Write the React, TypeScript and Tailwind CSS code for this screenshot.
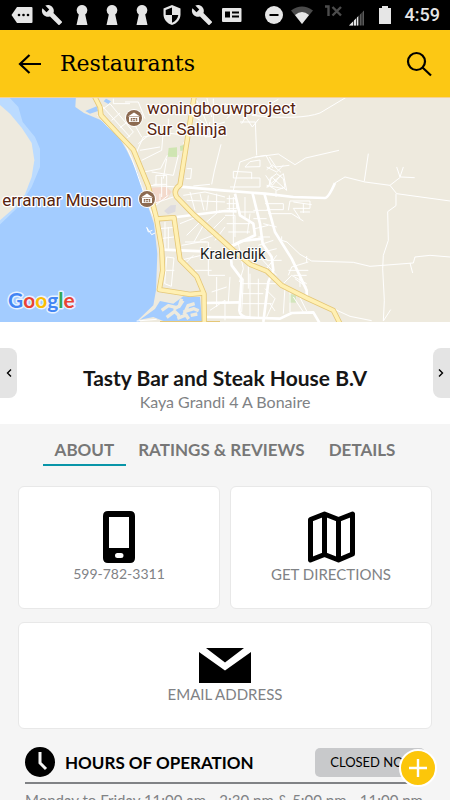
import type { ReactNode } from 'react';
import { useState } from 'react';
import clsx from 'clsx';

const TABS = ['About', 'Ratings & Reviews', 'Details'];

const HOURS = ['Monday to Friday 11:00 am - 2:30 pm & 5:00 pm - 11:00 pm'];

// ── Status bar icons ─────────────────────────────────────────────────────────
function WrenchIcon() {
    return (
        <svg viewBox="0 0 24 24" className="h-[22px] w-[22px]" fill="#e6e6e6">
            <path d="M22.7 19l-9.1-9.1c.9-2.3.4-5-1.5-6.9-2-2-5-2.4-7.4-1.3L9 6 6 9 1.6 4.700C.4 7.100.9 10.100 2.900 12.100c1.900 1.900 4.600 2.400 6.900 1.500l9.100 9.100c.4.4 1 .4 1.400 0l2.300-2.300c.5-.4.5-1.100.1-1.400z" />
        </svg>
    );
}

function KeyholeIcon() {
    return (
        <svg viewBox="0 0 12 20" className="h-5 w-3" fill="#e6e6e6">
            <path d="M6 0a5.300 5.300 0 0 1 3.200 9.500L11.500 20H.5L2.800 9.500A5.300 5.300 0 0 1 6 0z" />
        </svg>
    );
}

function MessageIcon() {
    return (
        <svg viewBox="0 0 22 16" className="h-4 w-[22px]">
            <path d="M6 0h14.500q1 0 1 1v14q0 1-1 1H6L.5 8z" fill="#e6e6e6" />
            <g fill="#000">
                <circle cx="8" cy="8" r="1.300" />
                <circle cx="12.500" cy="8" r="1.300" />
                <circle cx="17" cy="8" r="1.300" />
            </g>
        </svg>
    );
}

function ShieldIcon() {
    return (
        <svg viewBox="0 0 18 20" className="h-5 w-[18px]">
            <path d="M9 0l8.500 3.500v6c0 5-3.500 9-8.500 10.500C4 18.500.5 14.500.5 9.500v-6z" fill="#e6e6e6" />
            <path d="M9 2.500V10H2.700V5zM9 10h6.300c-.5 3.500-3 6.500-6.300 7.700z" fill="#000" />
        </svg>
    );
}

function CardIcon() {
    return (
        <svg viewBox="0 0 20 14" className="h-[14px] w-5">
            <rect width="19.500" height="14" rx="1" fill="#e6e6e6" />
            <path d="M3 3.500h5v6H3zM10 3.500h7v2h-7zM10 7.500h7v2h-7z" fill="#000" />
        </svg>
    );
}

function StatusBar() {
    const notifications: ReactNode[] = [
        <MessageIcon />,
        <WrenchIcon />,
        <KeyholeIcon />,
        <KeyholeIcon />,
        <KeyholeIcon />,
        <ShieldIcon />,
        <WrenchIcon />,
        <CardIcon />,
    ];

    return (
        <div className="flex h-[30px] shrink-0 items-center justify-between bg-black pr-[10px] pl-[7px]">
            <div className="flex">
                {notifications.map((icon, i) => (
                    <span key={i} className="flex h-[30px] w-[30px] items-center justify-center">
                        {icon}
                    </span>
                ))}
            </div>
            <div className="flex items-center gap-2">
                <svg viewBox="0 0 18 18" className="h-[18px] w-[18px]">
                    <circle cx="9" cy="9" r="9" fill="#e6e6e6" />
                    <path d="M4.500 8h9v2h-9z" fill="#000" />
                </svg>
                <svg viewBox="0 0 22 18" className="h-[18px] w-[22px]">
                    <path d="M0 4.500Q11-3.500 22 4.500L11 18z" fill="#4a4a4a" />
                    <path d="M4 9q7-6 14 0L11 18z" fill="#e6e6e6" />
                </svg>
                <svg viewBox="0 0 40 24" className="ml-1 h-6 w-10">
                    <path d="M0 3.500h3.500V13M7.500 4l8.500 8.500M16 4l-8.500 8.500" fill="none" stroke="#4c4c4c" strokeWidth="2.400" />
                    <path d="M24 22.500L39 7.500v15z" fill="#5a5a5a" />
                    <path d="M24 22.500l9-9v9z" fill="#e6e6e6" />
                    <path d="M28.500 16v7M31.500 14v9M34.500 11v12M37 8v15" stroke="#000" strokeWidth=".7" />
                </svg>
                <svg viewBox="0 0 12 18" className="mx-[6px] h-[18px] w-3" fill="#e6e6e6">
                    <path d="M3 0h6v2h3v16H0V2h3z" />
                </svg>
                <span className="font-[Roboto,sans-serif] text-[18px] leading-[30px] font-medium text-[#e6e6e6]">4:59</span>
            </div>
        </div>
    );
}

// ── Map ──────────────────────────────────────────────────────────────────────
function MuseumPin({ x, y }: { x: number; y: number }) {
    return (
        <g transform={`translate(${x} ${y})`}>
            <circle r="9" fill="#fff" />
            <circle r="8" fill="#8c6a50" />
            <path d="M-6-1.500L0-5.500l6 4zM-5-1h10v5H-5z" fill="#fff" />
            <path d="M-3.200 0h6.400v3.200h-6.400z" fill="#8c6a50" />
            <path d="M-1.700 3.200V.8L0 2.200 1.700.8v2.400" fill="none" stroke="#fff" strokeWidth=".9" />
        </g>
    );
}

const GOLD_ROADS = [
    'M282-5L300 30L303 55L352 108L400 158L445 268L470 366L522 362L540 488L590 538L612 590L613 690',
    'M583-5L540 264Q518 280 530 300L580 352L700 460L750 502L800 522L845 565L920 603L1000 640L1025 690',
    'M470 366L485 455L488 520L478 578L570 592L612 588',
];

function MapView() {
    return (
        <svg
            viewBox="0 0 450 225"
            preserveAspectRatio="xMidYMid slice"
            className="block h-[225px] w-full shrink-0 bg-[#eeeade]"
            role="img"
            aria-label="Map of Kralendijk"
            fontFamily="Roboto, sans-serif"
        >
            <g transform="scale(.33333)" fill="none" strokeLinejoin="round">
                <path d="M-5-5H228L226 30L252 48L300 68L345 100L380 160L412 225L435 300L462 380L472 470L468 580L460 625L415 668L430 685H-5z" fill="#a3ccff" />
                <path d="M-5-5H22L55 30L68 75L105 120L120 155V210L95 270L60 325L-5 387z" fill="#bbdbff" />
                <path d="M-5 20L30 50L65 92L95 138L103 190L95 240L75 292L40 335L-5 374z" fill="#eeeade" />
                <path d="M256 42L290 28L294 42L270 50z" fill="#a3ccff" />
                <path d="M318 5l15 8-8 8-14-8z" fill="#a3ccff" />

                {/* Marina */}
                <path d="M420 668L465 636L480 612L520 620L550 598L600 600L606 672H490l-30-12z" fill="#a3ccff" />
                <path d="M485 640l20-14 22 5M545 605l-8 24 12-18M500 661l24-18 14 14M552 652l12-26 20-6M550 645l32-10 14 6M520 637l18-10M532 664l26-10 8 12M572 655l20-4" stroke="#eeeade" strokeWidth="10" />

                {/* Parks and city centre */}
                <path d="M506 153l25-2v29l-28-1zM540 147l13-4v17l-12 2z" fill="#cfe5b2" />
                <path d="M868 592h20v25h-20z" fill="#d3e5bc" />
                <path d="M450 272l50-2 15 14-12 20-50 24z" fill="#f3d9cb" />
                <path d="M492 342l20-17 16-1-2 20-22 8z" fill="#dddbdf" />

                {/* Minor streets */}
                <g stroke="#fff" strokeWidth="3">
                    <path d="M300 20l90 100M310 35l20-15 70 85-18 18M335 70l25-22M360 92l26-20M375 15h40l20 50M340 5v15h50" />
                    <path d="M410 165l20-45 70-12 70 8M415 140l55-45M425 190l60-30 5-60M432 225l50-10 20-40M425 120l-20-35M505 108V65M480 150l-60 10M500 185l-10 60M445 265l90 5M455 225l65 10 15-60M550 140l20-35" />
                    <path d="M468 265v-30h32v60M485 240v60M500 262h-40M505 295l-45 35M520 300l-60 20M480 290v20" />
                    <path d="M590 10l15 30 70 0M585 60l30 20v40l60-5M575 100l45 15 10-40M605 40l20 50 50-15M620 0l15 60M640 5v90l35 10M650 40h30M560 215h15l-3 30h-15M635 262l8-40 20-80M630 262l-50 5" />
                    <path d="M475 395l50-4M480 425l50-6M465 408l-10 5-14-20M440 390l5 15 12-5M495 375v85M505 390v65M500 480l-6 80 20 8 8-85zM498 520h25M545 445l55-10h25v25M555 435h65M540 490l85-20 50 5M550 505l30-30M625 465v70h50M585 520h50M540 380l50-20 30 40M600 375l-40 40M610 385l-28 50M545 325l45 25M550 295l65-10 60 15M570 285l15 55M600 290l12 50M625 295l-5 45M650 290v55M560 310l115 5M640 395l35-35M620 375l40-35M645 430l30-40M600 430l40-15" />
                    <path d="M700 280l20-85 40-14 75-10 50 32 32-20 100-23M770 175L766 75H720M765 180l33-5 20 38M690 270h90v-27h-80M700 243v-20l55 3v20M735 210l15-16 30-5v20zM725 80l12-20 20 30 20-25M680 65l25-25 80-5 50-28M675 20l30 15" />
                    <path d="M808 180l20 30 40-5M800 218l18-14 25 22M800 210l30 15 20-20M800 270l50-40 10 50-45-40-10 30zM810 245l20-15 20 15 5 25-25 10-20-12zM800 265l50 10M828 280v20M797 235l20 30 25-30" />
                    <path d="M755 55Q900 70 960 48L1040 0M1093 252L1105 170M1190 210l10 30 10-30M1170 265l32-25 42 2" />
                    <path d="M1005 258L1035 240L1095 255L1170 265L1190 290L1350 312M1188 290V326L1163 344L1165 430L1150 475L1148 515L1153 610L1150 672L1172 638" />
                    <path d="M845 430l16 5L900 472L935 492L1060 496L1110 508L1240 498L1245 480L1290 475L1350 480M1230 498l8 30M925 495l-50 15M920 495v-18M875 510l-10 25M845 430v-12" />
                    <path d="M795 320h55v18h-50M865 340l5-28h60v22h-50l20 30M900 345h30M805 350h70l35 22M910 318v30M880 315l55 8" />
                    <path d="M680 305h30v30h-30M688 295v50M700 300v65M680 320h35M675 355h30v65M680 380h70M685 405h65M700 360v80M720 345h45M735 300v60M750 350l-8 60M760 365h40M765 395l40-10M775 420h35M775 445l45-15M790 465l40-10M800 490h45M830 475l-30 40M790 380l40 10M760 340h50" />
                    <path d="M715 440l15 75-12 40M725 465l50 10 55 60M745 485v90M690 540l-5 75M730 545l-5 100M750 530v130M775 545v115M795 575l30 30-25 55M725 560h110M725 590h65M725 620h90M810 620l15 22M855 570l-5 80M870 575v70M880 600l30 45M850 560l25-25 45 25M865 520h60M880 535h40M885 545l35 25M900 530v40M630 640l45-30v60M650 540v90M680 570l-45 15" />
                    <path d="M410 672l60-5M1000 635l50 23 65 13M900 602l20 40" />
                </g>

                {/* Main streets */}
                <g stroke="#fff" strokeWidth="8">
                    <path d="M540 269L675 281L795 290L880 300L975 303Q985 303 1005 258" />
                    <path d="M530 360L675 342L710 343M470 366L488 458L613 463M613 618L720 616M615 660L725 661L840 665L875 648L940 646L960 680" />
                    <path d="M705 290L720 355L760 380L765 415L690 450L695 505L725 545L718 640Q720 662 750 661M758 290L780 380L788 440L815 480L820 520L805 555L790 675M793 290L825 405L875 485L920 580V602" />
                    <path d="M688 450L725 432L790 425" />
                </g>
                <path d="M293 55Q320 90 350 112T410 225T465 370T485 460" stroke="#fff" strokeWidth="3" />

                {GOLD_ROADS.map((d) => <path key={d} d={d} stroke="#e5c777" strokeWidth="16" />)}
                <path d="M480 674h180" stroke="#e5c777" strokeWidth="4" />
                {GOLD_ROADS.map((d) => <path key={d} d={d} stroke="#fff0b3" strokeWidth="11" />)}
            </g>
            <path d="M0 .5h450" stroke="#f6d292" />

            <MuseumPin x={134} y={21} />
            <MuseumPin x={147} y={102} />
            <g fontSize="17" fill="#57240f" stroke="#fff" strokeWidth="2.500" strokeLinejoin="round" paintOrder="stroke">
                <text x="147" y="17">woningbouwproject</text>
                <text x="147" y="38">Sur Salinja</text>
                <text x="132" y="109" textAnchor="end">erramar Museum</text>
            </g>
            <text x="200" y="162" fontSize="15" fill="#222" stroke="#fff" strokeWidth="2" paintOrder="stroke">Kralendijk</text>
            <text
                x="8"
                y="211"
                fontFamily="Lato, sans-serif"
                fontSize="21"
                fontWeight="700"
                stroke="#e8f2ff"
                strokeWidth="3"
                strokeLinejoin="round"
                paintOrder="stroke"
            >
                <tspan fill="#4285f4">G</tspan>
                <tspan fill="#ea4335">o</tspan>
                <tspan fill="#fbbc05">o</tspan>
                <tspan fill="#4285f4">g</tspan>
                <tspan fill="#34a853">l</tspan>
                <tspan fill="#ea4335">e</tspan>
            </text>
        </svg>
    );
}

// ── Contact cards ────────────────────────────────────────────────────────────
function ContactCard({ href, label, className, children }: { href: string; label: string; className?: string; children: ReactNode }) {
    return (
        <a
            href={href}
            className={clsx(
                'flex flex-col items-center gap-px rounded-md border border-[#e8e8e8] bg-white pt-6 leading-5 text-[#808285] uppercase',
                className
            )}
        >
            {children}
            <span>{label}</span>
        </a>
    );
}

export default function App() {
    const [activeTab, setActiveTab] = useState('About');

    return (
        <div className="flex h-screen flex-col overflow-hidden bg-[#f5f5f5] font-[Lato,sans-serif]">
            <StatusBar />

            <header className="flex h-[67px] shrink-0 items-center bg-[#fcc814] px-[18px]">
                <button aria-label="Back" className="mr-[18px]">
                    <svg viewBox="0 0 24 22" className="h-[22px] w-6" fill="none" stroke="#000" strokeWidth="2.200">
                        <path d="M23 11H2M11.500 2L2 11l9.500 9" />
                    </svg>
                </button>
                <h1 className="flex-1 font-['DejaVu_Serif',serif] text-[22px] leading-7">Restaurants</h1>
                <button aria-label="Search">
                    <svg viewBox="0 0 26 26" className="h-[26px] w-[26px]" fill="none" stroke="#000" strokeWidth="2.200">
                        <circle cx="10.500" cy="10.500" r="8.500" />
                        <path d="M16.500 16.500l8.500 8" />
                    </svg>
                </button>
            </header>

            <MapView />

            <main className="flex-1 overflow-y-auto [scrollbar-width:none]">
                <section className="flex h-[102px] items-center justify-between bg-white">
                    <button aria-label="Previous listing" className="flex h-[50px] w-[17px] items-center justify-center rounded-r-lg bg-[#e4e4e4]">
                        <svg viewBox="0 0 6 8" className="h-2 w-[6px]" fill="none" stroke="#000" strokeWidth="1.400">
                            <path d="M5 .5L1.500 4L5 7.500" />
                        </svg>
                    </button>
                    <div className="pt-[34px] text-center">
                        <h2 className="text-[21px] leading-6 font-bold text-[#161616]">Tasty Bar and Steak House B.V</h2>
                        <p className="text-[16px] leading-6 text-[#808285]">Kaya Grandi 4 A Bonaire</p>
                    </div>
                    <button aria-label="Next listing" className="flex h-[50px] w-[17px] items-center justify-center rounded-l-lg bg-[#e4e4e4]">
                        <svg viewBox="0 0 6 8" className="h-2 w-[6px]" fill="none" stroke="#000" strokeWidth="1.400">
                            <path d="M1 .5L4.500 4L1 7.500" />
                        </svg>
                    </button>
                </section>

                <nav className="flex justify-center pt-3">
                    {TABS.map((tab) => (
                        <button
                            key={tab}
                            onClick={() => setActiveTab(tab)}
                            className={clsx(
                                'border-b-2 px-3 text-[17px] leading-7 font-bold whitespace-nowrap text-[#777] uppercase',
                                activeTab === tab ? 'border-[#0895a8]' : 'border-transparent'
                            )}
                        >
                            {tab}
                        </button>
                    ))}
                </nav>

                <div className="grid grid-cols-2 gap-x-[10px] gap-y-[13px] px-[18px] pt-5">
                    <ContactCard href="tel:599-782-3311" label="599-782-3311" className="h-[123px] text-[14px]">
                        <svg viewBox="0 0 32 52" className="h-[52px] w-8">
                            <path fillRule="evenodd" d="M5 0h22q5 0 5 5v42q0 5-5 5H5q-5 0-5-5V5q0-5 5-5zM6 6v31h20V6zM14.500 42a2.500 2.500 0 0 0 0 5h3.500a2.500 2.500 0 0 0 0-5z" />
                        </svg>
                    </ContactCard>
                    <ContactCard href="#directions" label="Get Directions" className="h-[123px] text-[15px]">
                        <svg viewBox="0 0 47 52" className="h-[52px] w-[47px]" fill="none" stroke="#000" strokeWidth="5" strokeLinejoin="round">
                            <path d="M2.500 8.500L16.500 3L30.500 8.500L44.500 3V43L30.500 49L16.500 43.500L2.500 49zM16.500 3v40.500M30.500 8.500V49" />
                        </svg>
                    </ContactCard>
                    <ContactCard href="#email" label="Email Address" className="col-span-2 h-[107px] text-[15px]">
                        <svg viewBox="0 0 52 36" className="h-9 w-[52px]">
                            <path d="M7 1h38L26 15.500zM0 5l26 18.500L52 5v31H0z" />
                        </svg>
                    </ContactCard>
                </div>

                <section className="px-[25px] pt-[18px]">
                    <div className="flex items-center border-b-2 border-[#808285] pb-[5px]">
                        <svg viewBox="0 0 30 30" className="mr-[10px] h-[30px] w-[30px]">
                            <circle cx="15" cy="15" r="15" />
                            <path d="M15 5v11l6 6" fill="none" stroke="#f5f5f5" strokeWidth="3" />
                        </svg>
                        <h3 className="flex-1 text-[17px] leading-[29px] font-bold uppercase">Hours of Operation</h3>
                        <span className="rounded-[5px] bg-[#c8c9cb] pr-2 pl-[15px] text-[13px] leading-[29px] uppercase">Closed Now</span>
                    </div>
                    {HOURS.map((line) => (
                        <p key={line} className="pt-1 text-[15px] leading-6 whitespace-nowrap text-[#808285]">{line}</p>
                    ))}
                </section>
            </main>

            <button
                aria-label="Add"
                className="fixed right-[13px] bottom-[13px] flex h-[38px] w-[38px] items-center justify-center rounded-full border-2 border-white bg-[#fcc60a]"
            >
                <svg viewBox="0 0 20 20" className="h-5 w-5" stroke="#fff" strokeWidth="2.400">
                    <path d="M10 1v18M1 10h18" />
                </svg>
            </button>
        </div>
    );
}
